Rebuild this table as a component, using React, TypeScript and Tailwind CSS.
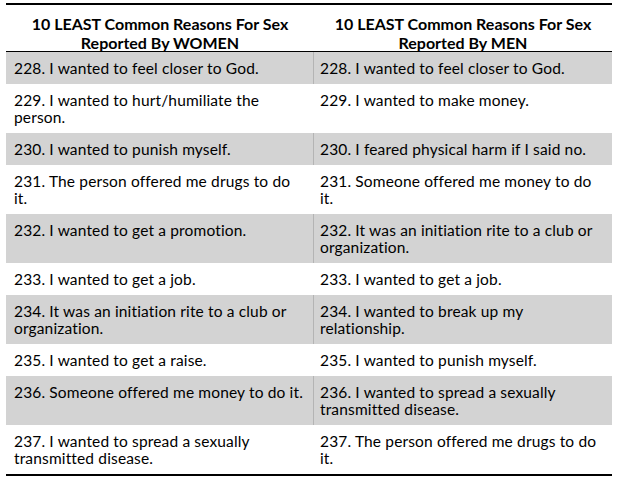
const rows: { women: string[]; men: string[]; shaded: boolean }[] = [
  { women: ["228. I wanted to feel closer to God."], men: ["228. I wanted to feel closer to God."], shaded: true },
  { women: ["229. I wanted to hurt/humiliate the", "person."], men: ["229. I wanted to make money."], shaded: false },
  { women: ["230. I wanted to punish myself."], men: ["230. I feared physical harm if I said no."], shaded: true },
  { women: ["231. The person offered me drugs to do", "it."], men: ["231. Someone offered me money to do", "it."], shaded: false },
  { women: ["232. I wanted to get a promotion."], men: ["232. It was an initiation rite to a club or", "organization."], shaded: true },
  { women: ["233. I wanted to get a job."], men: ["233. I wanted to get a job."], shaded: false },
  { women: ["234. It was an initiation rite to a club or", "organization."], men: ["234. I wanted to break up my", "relationship."], shaded: true },
  { women: ["235. I wanted to get a raise."], men: ["235. I wanted to punish myself."], shaded: false },
  { women: ["236. Someone offered me money to do it."], men: ["236. I wanted to spread a sexually", "transmitted disease."], shaded: true },
  { women: ["237. I wanted to spread a sexually", "transmitted disease."], men: ["237. The person offered me drugs to do", "it."], shaded: false },
];

function Lines({ lines }: { lines: string[] }) {
  return (
    <>
      {lines.map((l, i) => (
        <div key={i} className="whitespace-nowrap">
          {l}
        </div>
      ))}
    </>
  );
}

export default function App() {
  return (
    <div className="w-[617px] h-[479px] bg-white pt-[3px] pl-[6px] font-['Lato','Liberation_Sans',sans-serif] text-black">
      <div className="w-[606px] border-t-2 border-b-2 border-black">
        {/* Header */}
        <div className="grid grid-cols-[308px_298px] h-[47px] border-b border-black font-bold text-[16px] leading-[19px] text-center">
          <div className="pt-[9px]">
            10 LEAST Common Reasons For Sex
            <br />
            Reported By WOMEN
          </div>
          <div className="pt-[9px]">
            10 LEAST Common Reasons For Sex
            <br />
            Reported By MEN
          </div>
        </div>

        {/* Rows */}
        {rows.map((r, i) => (
          <div
            key={i}
            className={`grid grid-cols-[308px_298px] text-[15.5px] tracking-[0.15px] leading-[17px] ${r.shaded ? "bg-[#d3d3d3]" : "bg-white"}`}
          >
            <div className={`pl-[8px] pt-[8px] pb-[7px] ${r.shaded ? "border-r border-[#b4b4b4]" : "border-r border-white"}`}>
              <Lines lines={r.women} />
            </div>
            <div className="pl-[6px] pt-[8px] pb-[7px]">
              <Lines lines={r.men} />
            </div>
          </div>
        ))}
      </div>
    </div>
  );
}
